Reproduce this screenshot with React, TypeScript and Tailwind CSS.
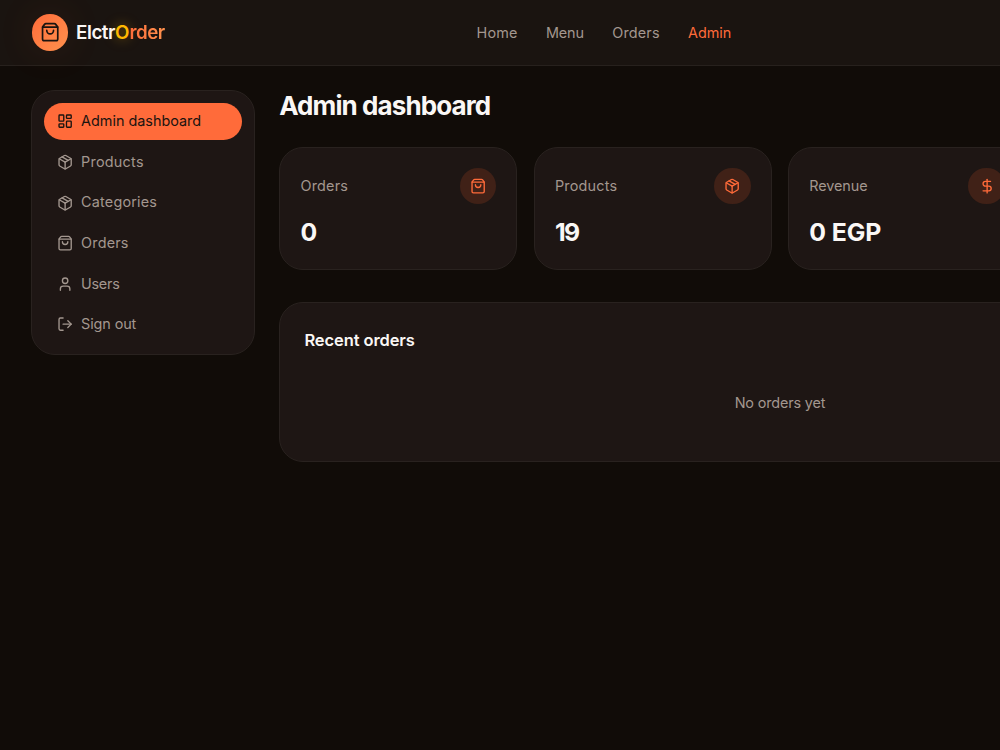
import { clsx } from 'clsx'
import { DollarSign, LayoutDashboard, LogOut, Package, ShoppingBag, User, type LucideIcon } from 'lucide-react'

interface NavItem {
    label: string
    className: string
    active?: boolean
}

interface SidebarItem extends NavItem {
    icon: LucideIcon
}

interface StatCardProps {
    label: string
    value: string
    icon: LucideIcon
    labelClass: string
    valueClass: string
}

const navItems: NavItem[] = [
    { label: 'Home', className: 'w-[41px] tracking-[0.2px]' },
    { label: 'Menu', className: 'w-[38px] tracking-[-0.1px]' },
    { label: 'Orders', className: 'w-[47.5px] tracking-[0.2px]' },
    { label: 'Admin', className: 'w-[44px]', active: true },
]

const sidebarItems: SidebarItem[] = [
    { label: 'Admin dashboard', className: '', icon: LayoutDashboard, active: true },
    { label: 'Products', className: 'tracking-[0.25px]', icon: Package },
    { label: 'Categories', className: 'tracking-[0.2px]', icon: Package },
    { label: 'Orders', className: 'tracking-[0.2px]', icon: ShoppingBag },
    { label: 'Users', className: 'tracking-[-0.25px]', icon: User },
    { label: 'Sign out', className: 'tracking-[-0.1px]', icon: LogOut },
]

const stats: StatCardProps[] = [
    { label: 'Orders', value: '0', icon: ShoppingBag, labelClass: 'tracking-[0.2px]', valueClass: '' },
    { label: 'Products', value: '19', icon: Package, labelClass: 'tracking-[0.2px]', valueClass: 'tracking-[-1.6px]' },
    { label: 'Revenue', value: '0 EGP', icon: DollarSign, labelClass: 'tracking-[-0.1px]', valueClass: 'tracking-[-0.1px]' },
]

function Header() {
    return (
        <header className="flex h-[66px] items-center border-b border-[#27211d] bg-[#1a1410] pl-[31.6px]">
            <div className="flex w-[445px] items-center">
                <div className="flex size-[36.5px] items-center justify-center rounded-full bg-gradient-to-br from-[#ff6b3a] to-[#ff914d] text-[#1a1410] shadow-[0_0_40px_rgba(255,107,58,0.1)]">
                    <ShoppingBag size={20.3} />
                </div>
                <span className="ml-2 whitespace-nowrap pt-[2px] text-[18.8px] font-semibold tracking-[-0.5px] text-[#faf7f5]">
                    Elctr
                    <span className="tracking-[0.1px] text-[#ffb800] [text-shadow:0_0_12px_rgba(255,184,0,0.5)]">O</span>
                    <span className="bg-gradient-to-r from-[#ff6b3a] to-[#ff914d] bg-clip-text text-transparent">rder</span>
                </span>
            </div>
            <nav className="flex gap-[28.3px] text-[14.4px]">
                {navItems.map((item) => (
                    <a
                        key={item.label}
                        className={clsx('whitespace-nowrap', item.className, item.active ? 'text-[#ff6b3a]' : 'text-[#a3978f]')}
                    >
                        {item.label}
                    </a>
                ))}
            </nav>
        </header>
    )
}

function Sidebar() {
    return (
        <aside className="flex h-[264.5px] w-[223.5px] shrink-0 flex-col gap-[4.1px] rounded-[24px] border border-[#29221f] bg-[#1e1614] p-[12px]">
            {sidebarItems.map(({ label, icon: Icon, active, className }) => (
                <a
                    key={label}
                    className={clsx(
                        'flex h-[36.5px] shrink-0 items-center gap-2 rounded-full px-[12.5px] text-[14.4px]',
                        active ? 'bg-[#ff6b3a] text-[#1a1410]' : 'text-[#a3978f]'
                    )}
                >
                    <Icon size={16.25} />
                    <span className={clsx('pb-px', className)}>{label}</span>
                </a>
            ))}
        </aside>
    )
}

function StatCard({ label, value, icon: Icon, labelClass, valueClass }: StatCardProps) {
    return (
        <div className="h-[123px] rounded-[24px] border border-[#29221f] bg-[#1e1614] px-[20.3px] pt-[20.1px]">
            <div className="flex items-center justify-between">
                <span className={clsx('pb-px text-[14.4px] text-[#a3978f]', labelClass)}>{label}</span>
                <span className="flex size-[36.5px] items-center justify-center rounded-full bg-[#402117] text-[#ff6b3a]">
                    <Icon size={16.25} />
                </span>
            </div>
            <div className={clsx('mt-[11px] text-[24.8px] font-bold leading-[34px] text-[#faf7f5]', valueClass)}>{value}</div>
        </div>
    )
}

export default function App() {
    return (
        <div className="h-[750px] w-full overflow-hidden bg-[#110c08] font-['Inter',sans-serif]">
            <div className="w-[1312px]">
                <Header />
                <div className="flex gap-[24.4px] px-[31.3px] pt-[24.3px]">
                    <Sidebar />
                    <main className="min-w-0 flex-1">
                        <h1 className="text-[26px] font-bold leading-[32px] tracking-[-0.9px] text-[#faf7f5]">Admin dashboard</h1>
                        {/* Last column of the grid stays free */}
                        <div className="mt-[24.4px] grid grid-cols-4 gap-[16.25px]">
                            {stats.map((stat) => (
                                <StatCard key={stat.label} {...stat} />
                            ))}
                        </div>
                        <section className="mt-[32.5px] h-[160px] rounded-[24px] border border-[#29221f] bg-[#1e1614] px-[24.2px] pt-[23.6px]">
                            <h2 className="text-[16.5px] font-semibold leading-[26px] tracking-[-0.1px] text-[#faf7f5]">Recent orders</h2>
                            <p className="mt-[39.4px] text-center text-[14.4px] leading-[22px] tracking-[-0.15px] text-[#a3978f]">No orders yet</p>
                        </section>
                    </main>
                </div>
            </div>
        </div>
    )
}
